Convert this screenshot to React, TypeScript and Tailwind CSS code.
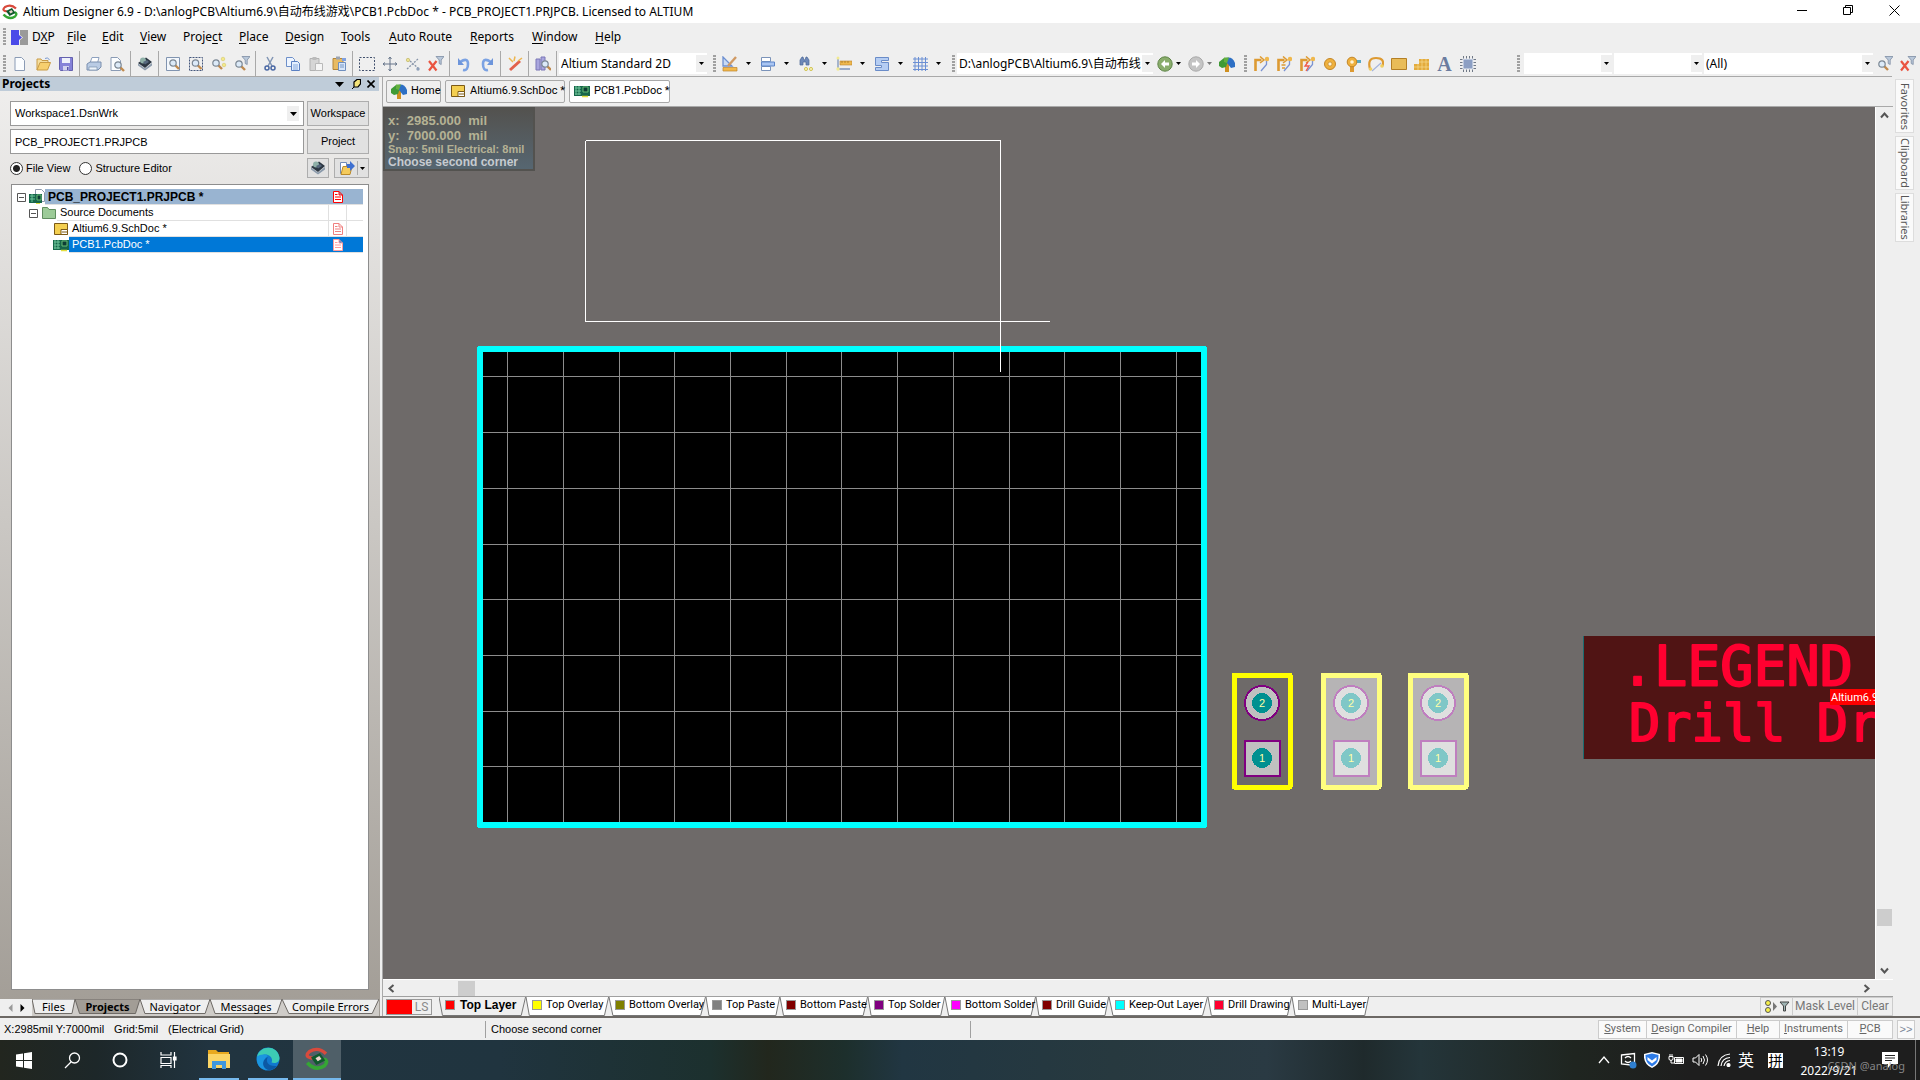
import type { ReactNode } from 'react'

// ---------- icons ----------

function Ic({ children, size = 16 }: { children: ReactNode; size?: number }) {
  return <svg width={size} height={size} viewBox="0 0 16 16" fill="none" className="shrink-0">{children}</svg>
}

function Caret() {
  return <svg width="7" height="4" viewBox="0 0 7 4" className="shrink-0 pointer-events-none"><path d="M0 0h7L3.5 4z" fill="#000" /></svg>
}

function SmallCaret({ fill = '#000' }: { fill?: string }) {
  return <svg width="5" height="3" className="shrink-0"><path d="M0 0h5L2.5 3z" fill={fill} /></svg>
}

const lens = (x: number, y: number) => (
  <>
    <path d={`M${x + 2} ${y + 2}l4 4`} stroke="#c08a4e" strokeWidth="2.4" />
    <circle cx={x} cy={y} r="3.2" fill="#dceaf8" stroke="#7b8794" strokeWidth="1.2" />
  </>
)
const funnel = <path d="M8 .5h8l-2.800 3.500v4.500l-2-1V4z" fill="#b9c8da" stroke="#7d8da3" strokeWidth=".8" />
const page = (x: number) => <path d={`M${x} 1.500h6.500l3 3v10H${x}z`} fill="#fbfdff" stroke="#8a9bb5" />
const track = (
  <>
    <path d="M2.500 15V4h6" stroke="#dd9a32" strokeWidth="2.600" />
    <path d="M7 .5l4 3.500-4 3" stroke="#dd9a32" strokeWidth="1.500" />
    <path d="M8 15l5.500-6.500V4" stroke="#7b93d2" strokeWidth="1.300" />
    <circle cx="14" cy="3" r="2.200" fill="#efb84d" />
  </>
)

const icons: Record<string, ReactNode> = {
  new: page(3),
  open: <><path d="M2 14V3h4l1 1.500h6V7" fill="#f5dfa0" stroke="#c99b45" /><path d="M2 14l3-7.500h10.500L12.500 14z" fill="#f7cf6e" stroke="#c99b45" /><path d="M10 2.500q3-2 4.500 1.500" stroke="#7c9bd0" /></>,
  save: <><path d="M1.500 1.500h13v13h-12l-1-1z" fill="#8582d8" stroke="#6461ae" /><path d="M4 2h8v5H4z" fill="#eef1fb" /><path d="M5 10h6v4.500H5z" fill="#d2d3ef" /><path d="M9 11h1.500v3H9z" fill="#5552a6" /></>,
  print: <><path d="M4 7l2-5.500h7L11.500 7" fill="#fff" stroke="#8da1bf" /><path d="M1 8l3-2h11v5l-3 3H1z" fill="#b9cbe4" stroke="#7a8fae" /><path d="M3 11h8v3H3z" fill="#eef4fb" stroke="#7a8fae" strokeWidth=".7" /></>,
  preview: <>{page(2)}{lens(9, 9)}</>,
  chip: <><path d="M1 7.500l7 5 7-5.500v2.500l-7 5-7-5z" fill="#8b9aab" /><path d="M1 7l8-5.500 6 4.500-7 6z" fill="#2c3743" /><circle cx="6" cy="4.500" r="3" fill="#8fb0a8" /><path d="M6 6l4-2 2 2-4 2.500z" fill="#55677c" /></>,
  zoomDoc: <><path d="M1.500 1.500h13v13h-13z" fill="#f3f7fc" stroke="#8194b0" />{lens(8, 7)}</>,
  zoomArea: <><path d="M1.500 1.500h13v13h-13z" stroke="#44577c" strokeDasharray="2 1" />{lens(7.5, 7)}</>,
  zoomSel: <>{lens(5, 7)}<circle cx="12" cy="3" r="1.800" fill="#f4e98a" stroke="#cdc05a" strokeWidth=".5" /><circle cx="13" cy="9" r="1.800" fill="#f4e98a" stroke="#cdc05a" strokeWidth=".5" /></>,
  zoomFilter: <>{funnel}{lens(5, 8)}</>,
  cut: <><path d="M5 1l5 9M11 1L6 10" stroke="#8195b4" strokeWidth="1.500" /><circle cx="5" cy="12" r="2" stroke="#4a68a4" strokeWidth="1.500" /><circle cx="11" cy="12" r="2" stroke="#4a68a4" strokeWidth="1.500" /></>,
  copy: <><path d="M1.500 1.500h6l2 2v7h-8z" fill="#eef5ff" stroke="#6d8fc9" /><path d="M6.500 5.500h6l2 2v7h-8z" fill="#e4effe" stroke="#5b80c2" /><path d="M8 9h5M8 11h5M8 13h5" stroke="#86a8dd" /></>,
  paste: <><path d="M2 2.500h9v12H2z" fill="#d5d5d5" stroke="#b2b2b2" /><path d="M7.500 7.500h7v7h-7z" fill="#f5f5f5" stroke="#b9b9b9" /><path d="M4.500 1h4v3h-4z" fill="#bbb" /></>,
  rubber: <><path d="M2 2.500h10v11H2z" fill="#e8bb63" stroke="#b4863a" /><path d="M5 .5h4v3H5z" fill="#9aa3b0" /><path d="M7.500 6.500h7v8h-7z" fill="#d7e6fa" stroke="#6f8fbe" /><path d="M9 9h4M9 11h4" stroke="#7796c4" /><path d="M11 2h4v3h-4z" fill="#7fa0e0" /></>,
  select: <path d="M.5 1.500h15v13H.5z" stroke="#41506d" strokeDasharray="2 1.500" />,
  move: <path d="M8 1v14M1 8h14M6.500 3L8 1l1.500 2M6.500 13L8 15l1.500-2M3 6.500L1 8l2 1.500M13 6.500L15 8l-2 1.500" stroke="#66758a" />,
  deselect: <><path d="M2 13L13 3M5 5l9 8" stroke="#8794a8" strokeDasharray="2 1.200" strokeWidth="1.300" /><circle cx="3" cy="4" r="1.700" fill="#ece192" stroke="#b9ae57" strokeWidth=".6" /><circle cx="13" cy="13" r="1.700" fill="#8fa0b9" /></>,
  clear: <><path d="M1 5l7.500 9.500M8.500 5L1 14.500" stroke="#ea5440" strokeWidth="2.200" />{funnel}</>,
  undo: <><path d="M4 6q8-5 8 2t-5 6" stroke="#7ba2e3" strokeWidth="2.600" /><path d="M2 2v7h6z" fill="#6d95db" /></>,
  redo: <><path d="M12 6Q4 1 4 8t5 6" stroke="#7ba2e3" strokeWidth="2.600" /><path d="M14 2v7H8z" fill="#6d95db" /></>,
  wand: <><path d="M3 14L13 5" stroke="#e2604a" strokeWidth="3" /><path d="M2 2l4 4M8 .5L7 5M15 2l-4 3" stroke="#edb64f" strokeWidth="1.500" /></>,
  browse: <><path d="M1 3h4v11H1zM6 1h4v13H6z" fill="#a9a6de" stroke="#7a77b6" />{lens(10, 8)}</>,
  draw: <><path d="M1 1v9h9z" fill="#c9dbf6" stroke="#6c8fd0" strokeWidth="1.300" /><path d="M14 1L6 10" stroke="#d09a64" strokeWidth="2.400" /><path d="M1 11.500h14v3.500H1z" fill="#f2b84c" stroke="#bd842c" strokeWidth=".7" /></>,
  align: <><path d="M1.500 1.500h9v4h-9zM1.500 10.500h9v4h-9z" fill="#fff" stroke="#7b93b9" /><path d="M1.500 6h13v4h-13z" fill="#a9c5f2" stroke="#5c84c8" /></>,
  find: <><path d="M2 9V4l2-3h1l1 3h1l1-3h1l2 3v5H8V6H5v3z" fill="#6d88b8" stroke="#4b6797" strokeWidth=".7" /><circle cx="8" cy="13" r="1.600" fill="#f6efae" stroke="#d3c65a" /><circle cx="13" cy="13" r="1.600" fill="#f6efae" stroke="#d3c65a" /></>,
  dimension: <><path d="M2 1v12h12" stroke="#7d94bb" strokeWidth="1.300" /><path d="M4 5h12v4H4z" fill="#efb84d" stroke="#bb8530" strokeWidth=".6" /><path d="M6 5v2M9 5v2M12 5v2" stroke="#9b6a21" strokeWidth=".7" /><circle cx="2" cy="2" r="1.500" fill="#f2ea92" /><circle cx="2" cy="13" r="1.700" fill="#f2ea92" /></>,
  room: <><path d="M14.500 1.500h-13v8h6v2h-6v3h13v-8h-7v-2h7z" fill="#b5cdf3" stroke="#6a8cc8" /></>,
  grid: <path d="M3 1v14M6.500 1v14M10 1v14M13.500 1v14M1 3h15M1 6.500h15M1 10h15M1 13.500h15" stroke="#6b8fd4" />,
  back: <><circle cx="8" cy="8" r="7.200" fill="#8aad6c" stroke="#5f8548" /><path d="M8 4L4 8l4 4V9.500h4v-3H8z" fill="#fff" /></>,
  forward: <><circle cx="8" cy="8" r="7.200" fill="#c4c4c4" stroke="#a9a9a9" /><path d="M8 4l4 4-4 4V9.500H4v-3h4z" fill="#fff" /></>,
  home: <><path d="M6 7h4v9H6z" fill="#cf9020" /><path d="M0 10V6l5-4 4 3-2 6-4 1z" fill="#3f9a35" /><path d="M7 2q6-2 9 5v4l-4 1-4-5z" fill="#2d6fc4" /><path d="M5 1.500h5L8 7l-3-1z" fill="#64b03f" /></>,
  track,
  trackF: <>{track}<path d="M5.500 9h4M6 12h3" stroke="#dd9a32" strokeWidth="1.300" /></>,
  trackX: <>{track}<path d="M9 6l-3 4h4l-3 5" stroke="#ef5a4c" strokeWidth="1.300" /></>,
  pad: <><circle cx="8" cy="8" r="5.500" fill="#efb13e" stroke="#c38526" /><circle cx="8" cy="8" r="2" fill="#fff4d6" stroke="#b77d23" strokeWidth=".6" /></>,
  via: <><path d="M5 9h4v7H5zM9 4h7v3H9z" fill="#dd9a32" /><path d="M12 4h4v3h-4z" fill="#58a8c4" /><circle cx="7" cy="6" r="4.800" fill="#efb13e" stroke="#c38526" /><circle cx="7" cy="6" r="1.800" fill="#fff4d6" /></>,
  arc: <><path d="M2 13Q-1 2 8 2t6.500 8" stroke="#dd9a32" strokeWidth="2.200" /><path d="M4 15L13 7" stroke="#a3b3dc" strokeWidth="1.200" /><circle cx="2.500" cy="13" r="1.800" fill="#efcf62" /><circle cx="14" cy="10" r="1.800" fill="#efcf62" /></>,
  fill: <path d="M.5 2.500h15v11H.5z" fill="#e9bc58" stroke="#b47f25" />,
  polygon: <><path d="M0 8h5V3h10v11H0z" fill="#e3ab3d" /><path d="M0 11h15M4 8v6M8 3v11M12 3v11M5 6h10" stroke="#f7dc93" strokeWidth=".7" /></>,
  comp: <><path d="M3.500 0v16M6.500 0v16M9.500 0v16M12.500 0v16M0 3.500h16M0 6.500h16M0 9.500h16M0 12.500h16" stroke="#6f7886" /><path d="M3 3h10v10H3z" fill="#8c9fc4" stroke="#e8ecf3" /></>,
  sch: <><path d="M1.500 2.500h13v11h-13z" fill="#f4cf50" stroke="#7c5a16" /><path d="M8 8.500h6.500v5H8z" fill="#fff" stroke="#7c5a16" /><path d="M9 11h5" stroke="#7c5a16" /></>,
  pcb: <><path d="M0 3h16v10H0z" fill="#17664a" /><path d="M1 5h6M1 8h6M1 11h6M2 3v9M5 3v9" stroke="#6fc59a" /><path d="M9 4h5v5H9z" fill="#0c3d35" stroke="#67bd74" /><path d="M8 13.500h6" stroke="#e3df3f" strokeWidth="1.500" /></>,
  project: <><path d="M6.500.5h6l3 3v9h-9z" fill="#fff" stroke="#8d99ab" /><path d="M0 5h13v9H0z" fill="#17664a" /><path d="M1 7h5M1 10h5M3 5v8" stroke="#6fc59a" /><path d="M8 6h4v5H8z" fill="#0c3d35" stroke="#67bd74" /><path d="M7 14.500h4" stroke="#e3df3f" /></>,
  folder: <path d="M1.500 13.500v-11h5l1.500 2h6.500v9z" fill="#9ccb98" stroke="#5f8d5f" />,
  openDoc: <><path d="M1.500 2.500h6v11h-6z" fill="#fff" stroke="#708bb8" /><path d="M2 14.500l2-8h9l-2 8z" fill="#f5cb5c" stroke="#bb8b2b" /><path d="M8 4h3V1l5 5-5 5V8H8z" fill="#3d6fd0" /></>,
  altium: <><path d="M14 4.500Q9-.5 3 3q-4 3.500 2 4.500" stroke="#d84a3c" strokeWidth="2.200" /><path d="M1.500 10.500Q7 16.500 13 12.500q3-3-.5-4.500" stroke="#35a634" strokeWidth="2.400" /><path d="M4 7l6-3 3.500 5-6 3z" fill="#0f5a2c" /><path d="M7 7.500l2.500-1.500L11 8l-2.500 1.500z" fill="#e9d3cb" /></>,
}

function Icon({ name, size }: { name: string; size?: number }) {
  return <Ic size={size}>{icons[name]}</Ic>
}

function DirtyDoc({ color }: { color: string }) {
  return (
    <svg width="10" height="12" viewBox="0 0 10 12" fill="#fff" stroke={color}>
      <path d="M.5.5h5.500l3.500 3.500v7.500h-9zM6 .5V4h3.500M2 3.500h2.500M2 6h6M2 8.500h6" />
    </svg>
  )
}

// ---------- toolbar ----------

const standardTools = [
  ['new', 'open', 'save'],
  ['print', 'preview'],
  ['chip'],
  ['zoomDoc', 'zoomArea', 'zoomSel', 'zoomFilter'],
  ['cut', 'copy', 'paste', 'rubber'],
  ['select', 'move', 'deselect', 'clear'],
  ['undo', 'redo'],
  ['wand'],
  ['browse'],
]

function Grip() {
  return <div className="w-[3px] h-[18px] mx-0.5 shrink-0 bg-[repeating-linear-gradient(#a0a0a0_0_2px,#efefef_2px_3px)]" />
}

function ToolButton({ name }: { name: string }) {
  return <button aria-label={name} className="w-[23px] h-[23px] shrink-0 flex items-center justify-center"><Icon name={name} /></button>
}

function Combo({ label, value, className }: { label: string; value: string; className: string }) {
  return (
    <div className={`relative h-[21px] bg-white shrink-0 ${className}`}>
      <select aria-label={label} className="appearance-none w-full h-full pl-0.5 pr-3 bg-transparent outline-none overflow-hidden whitespace-nowrap">
        <option>{value}</option>
      </select>
      <span className="absolute right-0 inset-y-0.5 w-[11px] flex items-center justify-center bg-[#efefef] pointer-events-none"><SmallCaret /></span>
    </div>
  )
}

function DropTool({ name }: { name: string }) {
  return (
    <div className="w-[38px] flex items-center gap-[5px] shrink-0">
      <ToolButton name={name} />
      <SmallCaret />
    </div>
  )
}

function Toolbar() {
  return (
    <>
      <div className="h-[25px] flex items-center px-px">
        <Grip />
        {standardTools.map((group, i) => (
          <div key={i} className="flex items-center shrink-0">
            {group.map(t => <ToolButton key={t} name={t} />)}
            <span className="w-px h-[25px] mx-0.5 bg-[#a9a9a9]" />
          </div>
        ))}
        <Combo label="View configuration" value="Altium Standard 2D" className="w-[148px]" />
        <div className="flex items-center ml-1">
          <Grip />
          {['draw', 'align', 'find', 'dimension', 'room', 'grid'].map(t => <DropTool key={t} name={t} />)}
        </div>
        <div className="flex items-center ml-1">
          <Grip />
          <Combo label="Document path" value="D:\anlogPCB\Altium6.9\自动布线" className="w-[196px]" />
          <div className="w-[31px] flex items-center"><ToolButton name="back" /><SmallCaret /></div>
          <div className="w-[31px] flex items-center"><ToolButton name="forward" /><SmallCaret fill="#777" /></div>
          <ToolButton name="home" />
        </div>
        <div className="flex items-center ml-1">
          <Grip />
          {['track', 'trackF', 'trackX', 'pad', 'via', 'arc', 'fill', 'polygon'].map(t => <ToolButton key={t} name={t} />)}
          <button aria-label="Place string" className="w-[23px] h-[23px] flex items-center justify-center font-['Liberation_Serif',serif] font-bold text-[20px] leading-5 text-[#6b7c9f]">A</button>
          <ToolButton name="comp" />
        </div>
        <div className="flex items-center ml-auto">
          <Grip />
          <Combo label="Net" value="" className="w-[88px] ml-0.5" />
          <Combo label="Component" value="" className="w-[88px] ml-0.5" />
          <Combo label="Filter" value="(All)" className="w-[169px] ml-0.5" />
          <ToolButton name="zoomFilter" />
          <ToolButton name="clear" />
        </div>
      </div>
      <div className="h-px bg-[#a9a9a9] mr-7" />
    </>
  )
}

// ---------- menu ----------

const menus = [
  ['D', 'X', 'P', 'w-[35px]'],
  ['', 'F', 'ile', 'w-[35px]'],
  ['', 'E', 'dit', 'w-[38px]'],
  ['', 'V', 'iew', 'w-[43px]'],
  ['Proje', 'c', 't', 'w-[56px]'],
  ['', 'P', 'lace', 'w-[46px]'],
  ['', 'D', 'esign', 'w-[56px]'],
  ['', 'T', 'ools', 'w-[48px]'],
  ['', 'A', 'uto Route', 'w-[81px]'],
  ['', 'R', 'eports', 'w-[62px]'],
  ['', 'W', 'indow', 'w-[63px]'],
  ['', 'H', 'elp', 'w-[40px]'],
]

function TitleBar() {
  return (
    <header className="h-[23px] bg-white flex items-center pr-[3px]">
      <span className="w-[23px] pl-0.5"><Icon name="altium" /></span>
      <h1 className="flex-1">Altium Designer 6.9 - D:\anlogPCB\Altium6.9\自动布线游戏\PCB1.PcbDoc * - PCB_PROJECT1.PRJPCB. Licensed to ALTIUM</h1>
      <div className="flex h-5 self-start">
        <button aria-label="Minimize" className="w-[46px] flex items-center justify-center"><svg width="10" height="10" stroke="#000"><path d="M0 5.500h10" /></svg></button>
        <button aria-label="Restore" className="w-[46px] flex items-center justify-center"><svg width="10" height="10" fill="none" stroke="#000"><path d="M.5 2.500h7v7h-7zM2.500 2V.5h7v7H8" /></svg></button>
        <button aria-label="Close" className="w-[46px] flex items-center justify-center"><svg width="11" height="11" stroke="#000"><path d="M.5.5l10 10M10.500.5l-10 10" /></svg></button>
      </div>
    </header>
  )
}

function MenuBar() {
  return (
    <nav className="h-7 flex items-center pl-px">
      <Grip />
      <span className="w-6 pl-[3px]">
        <svg width="17" height="15"><path d="M0 0h8v5l3 2.500L8 10v5H0z" fill="#4a4ae8" /><path d="M9 0h8v15H9v-5l3-2.500L9 5z" fill="#9a9a9a" /></svg>
      </span>
      {menus.map(([a, u, b, w]) => (
        <button key={a + u + b} className={`text-left shrink-0 whitespace-nowrap ${w}`}>{a}<span className="underline underline-offset-2">{u}</span>{b}</button>
      ))}
    </nav>
  )
}

// ---------- projects panel ----------

const panelTabs = [
  { label: 'Files', w: 'w-[43px]' },
  { label: 'Projects', w: 'w-[65px]' },
  { label: 'Navigator', w: 'w-[70px]' },
  { label: 'Messages', w: 'w-[72px]' },
  { label: 'Compile Errors', w: 'w-[97px]' },
]

function TreeBox() {
  return <svg width="9" height="9" fill="none" stroke="#555" className="shrink-0"><path d="M.5.5h8v8h-8zM2 4.500h5" /></svg>
}

function TreeRow({ indent, expand, icon, label, dirty, tone = '' }: { indent: string; expand?: boolean; icon: string; label: string; dirty?: string; tone?: string }) {
  return (
    <li className={`flex h-4 items-center ${indent}`}>
      {expand && <span className="w-[11px] mr-px flex"><TreeBox /></span>}
      <Icon name={icon} />
      <span className={`flex flex-1 h-4 items-center border-b border-[#e0e0e0] pl-[3px] ${tone}`}>
        <span className="flex-1 whitespace-pre">{label}</span>
        <span className={`w-[18px] h-4 flex items-center justify-center border-l ${tone ? 'border-transparent' : 'border-[#e0e0e0]'}`}>{dirty && <DirtyDoc color={dirty} />}</span>
        <span className={`w-[17px] h-4 border-l ${tone ? 'border-transparent' : 'border-[#e0e0e0]'}`} />
      </span>
    </li>
  )
}

function ProjectsPanel() {
  return (
    <aside className="w-[380px] shrink-0 flex flex-col text-[11px] bg-linear-to-b from-[#f0efee] to-[#a29d96]">
      <div className="h-[14px] mr-px flex items-center bg-[#bfccd9] pl-0.5 pr-1 font-['Noto_Sans',sans-serif] text-[12px] leading-[14px] font-bold">
        <h2 className="flex-1">Projects</h2>
        <button aria-label="Panel menu" className="w-4"><svg width="9" height="5"><path d="M0 0h9L4.500 5z" /></svg></button>
        <button aria-label="Pin" className="w-4"><svg width="10" height="11" fill="none"><path d="M1 10l3-3" stroke="#000" /><path d="M3 3l3-2.500h3.500V5L7 8H3z" fill="#f3e37a" stroke="#000" strokeWidth="1.200" /></svg></button>
        <button aria-label="Close panel"><svg width="8" height="8" stroke="#000" strokeWidth="1.600"><path d="M.5.5l7 7M7.500.5l-7 7" /></svg></button>
      </div>

      <div className="grid grid-cols-[1fr_62px] gap-[3px] mt-2.5 ml-2.5 mr-[11px]">
        <div className="relative h-[25px]">
          <select aria-label="Workspace" className="appearance-none w-full h-full border border-[#999] bg-white px-1 outline-none"><option>Workspace1.DsnWrk</option></select>
          <span className="absolute right-[5px] top-[5px] w-3 h-[15px] bg-[#efefef] flex items-center justify-center pointer-events-none"><Caret /></span>
        </div>
        <button className="border border-[#adadad] bg-[#e1e1e1]">Workspace</button>
        <input aria-label="Project" defaultValue="PCB_PROJECT1.PRJPCB" className="h-[25px] w-full min-w-0 border border-[#999] bg-white px-1 outline-none" />
        <button className="border border-[#adadad] bg-[#e1e1e1]">Project</button>
      </div>

      <div className="flex items-center h-5 mt-1 ml-2.5 mr-[11px]">
        {['File View', 'Structure Editor'].map((v, i) => (
          <label key={v} className="flex items-center gap-[3px] mr-[9px]">
            <input type="radio" name="view" defaultChecked={i === 0} className="appearance-none w-[13px] h-[13px] rounded-full border border-[#333] bg-white checked:bg-[radial-gradient(circle,#222_0_3px,#fff_4px)]" />
            {v}
          </label>
        ))}
        <button aria-label="Refresh" className="ml-auto w-[22px] h-5 border border-[#adadad] bg-[#e1e1e1] flex items-center justify-center"><Icon name="chip" /></button>
        <button aria-label="Open document" className="ml-[5px] w-[35px] h-5 border border-[#adadad] bg-[#e1e1e1] flex items-center justify-center gap-0.5">
          <Icon name="openDoc" /><span className="w-px h-3.5 bg-[#aaa]" /><SmallCaret />
        </button>
      </div>

      <ul className="flex-1 bg-white border border-[#8d8d8d] mt-1.5 mx-[11px] mb-[9px] pt-1 pl-[5px] pr-[5px]">
        <TreeRow indent="" expand icon="project" label="PCB_PROJECT1.PRJPCB *" dirty="#f00" tone="bg-[#99b4d1] font-bold text-[12px]" />
        <TreeRow indent="pl-3" expand icon="folder" label="Source Documents" />
        <TreeRow indent="pl-9" icon="sch" label="Altium6.9.SchDoc *" dirty="#f08080" />
        <TreeRow indent="pl-9" icon="pcb" label="PCB1.PcbDoc *" dirty="#ff9c9c" tone="bg-[#0078d7] text-white" />
      </ul>

      <div className="flex h-[17px] mr-px bg-[#cfccc8] font-['Noto_Sans',sans-serif] text-[11px] leading-[14px] shrink-0">
        <div className="w-8 flex items-center justify-around px-1 bg-[#efefef]">
          <button aria-label="Previous tab"><svg width="5" height="8"><path d="M4.500 0v8L.5 4z" fill="#999" /></svg></button>
          <button aria-label="Next tab"><svg width="5" height="8"><path d="M.5 0v8l4-4z" /></svg></button>
        </div>
        {panelTabs.map(t => (
          <button key={t.label} className={`relative h-[15px] shrink-0 whitespace-nowrap ${t.w}`}>
            <svg className="absolute inset-0 w-full h-full" preserveAspectRatio="none" viewBox="0 0 100 16">
              <path d="M0 0L7 15.500H93L100 0z" fill={t.label === 'Projects' ? '#a29d96' : '#efefef'} stroke="#6c6864" vectorEffect="non-scaling-stroke" />
            </svg>
            <span className={t.label === 'Projects' ? 'relative font-bold' : 'relative'}>{t.label}</span>
          </button>
        ))}
      </div>
    </aside>
  )
}

// ---------- pcb canvas ----------

const gridX = [124, 180, 236, 291, 347, 403, 458, 514, 570, 626, 681, 737, 793]
const gridY = [269, 325, 381, 437, 492, 548, 604, 659]
const parts = [
  { x: 879, line: '#ffff00', body: '#6e6a69', pad: '#c0c0c0', ring: '#800080', hole: '#009090' },
  { x: 968, line: '#ffff7f', body: '#b6b4b5', pad: '#dfdfdf', ring: '#bf7fbf', hole: '#7fc7c7' },
  { x: 1055, line: '#ffff7f', body: '#b6b4b5', pad: '#dfdfdf', ring: '#bf7fbf', hole: '#7fc7c7' },
]

function PcbCanvas() {
  return (
    <div className="relative flex-1 min-w-0 bg-[#6e6a69] overflow-hidden">
      <svg className="absolute inset-0 w-full h-full" fill="none" shapeRendering="crispEdges">
        <rect x="97" y="242" width="724" height="476" fill="#000" stroke="#0ff" strokeWidth="6" strokeLinejoin="round" />
        {gridX.map(x => <path key={x} d={`M${x + 0.5} 245v470`} stroke="#8c8c8c" />)}
        {gridY.map(y => <path key={y} d={`M100 ${y + 0.5}h718`} stroke="#8c8c8c" />)}
        <path d="M202.500 33.500h415v231M202.500 33.500v181h464" stroke="#fff" />

        {parts.map(p => (
          <g key={p.x}>
            <rect x={p.x - 28} y="568" width="56" height="112" fill={p.body} stroke={p.line} strokeWidth="5" strokeLinejoin="round" />
            <circle cx={p.x} cy="596" r="17" fill={p.pad} stroke={p.ring} strokeWidth="2" />
            <rect x={p.x - 17} y="634" width="35" height="35" fill={p.pad} stroke={p.ring} strokeWidth="2" />
            {[596, 651].map((y, i) => (
              <g key={y}>
                <circle cx={p.x} cy={y} r="10" fill={p.hole} />
                <text x={p.x} y={y + 4} textAnchor="middle" fill="#ffffa8" className="font-['Liberation_Sans',sans-serif] text-[11px]">{2 - i}</text>
              </g>
            ))}
          </g>
        ))}

        <rect x="1200" y="529" width="400" height="123" fill="#501414" />
        <path d="M1200.500 529v123" stroke="#1c6c70" />
        <g fill="#ff0030" stroke="#ff0030" strokeWidth="2" strokeLinejoin="round" className="font-['DejaVu_Sans_Mono',monospace]">
          <text x="1238" y="578" className="text-[55px]">.LEGEND</text>
          <text x="1246" y="634" className="text-[52px]">Drill Dr</text>
        </g>
        <rect x="1447" y="582" width="100" height="16" fill="#f00" />
        <text x="1448" y="594" fill="#fff" className="font-['Roboto',sans-serif] text-[11px]">Altium6.9</text>
      </svg>

      <div className="absolute left-0 top-0 w-[152px] h-[64px] border-2 border-[#53524f] bg-linear-to-b from-[#53524f] to-[#566671] pl-[3px] pt-1 font-bold text-[#b5b294] whitespace-pre">
        <p className="text-[13px] leading-[15px]">x:  2985.000  mil</p>
        <p className="text-[13px] leading-[15px]">y:  7000.000  mil</p>
        <p className="text-[11px] leading-[13px]">Snap: 5mil Electrical: 8mil</p>
        <p className="text-[12px] leading-[12px] text-[#c6cbd0]">Choose second corner</p>
      </div>
    </div>
  )
}

const docTabs = [
  { icon: 'home', label: 'Home', w: 'w-[55px]' },
  { icon: 'sch', label: 'Altium6.9.SchDoc *', w: 'w-[120px]' },
  { icon: 'pcb', label: 'PCB1.PcbDoc *', w: 'w-[101px]' },
]

const layers = [
  { label: 'Top Layer', sw: 'bg-[#ff0000]', w: 'w-[87px]' },
  { label: 'Top Overlay', sw: 'bg-[#ffff00]', w: 'w-[83px]' },
  { label: 'Bottom Overlay', sw: 'bg-[#808000]', w: 'w-[97px]' },
  { label: 'Top Paste', sw: 'bg-[#808080]', w: 'w-[74px]' },
  { label: 'Bottom Paste', sw: 'bg-[#800000]', w: 'w-[88px]' },
  { label: 'Top Solder', sw: 'bg-[#800080]', w: 'w-[77px]' },
  { label: 'Bottom Solder', sw: 'bg-[#ff00ff]', w: 'w-[91px]' },
  { label: 'Drill Guide', sw: 'bg-[#800000]', w: 'w-[73px]' },
  { label: 'Keep-Out Layer', sw: 'bg-[#00ffff]', w: 'w-[99px]' },
  { label: 'Drill Drawing', sw: 'bg-[#ff0030]', w: 'w-[84px]' },
  { label: 'Multi-Layer', sw: 'bg-[#c0c0c0]', w: 'w-[77px]' },
]

function Chevron({ d }: { d: string }) {
  return <svg width="9" height="9" fill="none" stroke="#555" strokeWidth="2"><path d={d} /></svg>
}

function Editor() {
  return (
    <main className="flex-1 min-w-0 flex flex-col border-l border-[#a9a9a9] ml-0.5">
      <div className="h-[30px] flex items-center gap-1 pl-[3px] pb-1 pt-[3px] border-b border-[#a9a9a9] shrink-0">
        {docTabs.map(t => (
          <button key={t.label} className={`h-[23px] border border-[#a9a9a9] rounded-xs flex items-center gap-1 pl-1 whitespace-nowrap font-['Roboto',sans-serif] text-[11px] ${t.w} ${t.icon === 'pcb' ? 'bg-white' : ''}`}>
            <Icon name={t.icon} />{t.label}
          </button>
        ))}
      </div>
      <div className="flex-1 min-h-0 flex">
        <PcbCanvas />
        <div className="w-[18px] border-l border-white flex flex-col items-center py-1">
          <button aria-label="Scroll up"><Chevron d="M1 6.500l3.500-4L8 6.500" /></button>
          <div className="flex-1" />
          <div className="w-[15px] h-[17px] bg-[#cdcdcd] mb-10" />
          <button aria-label="Scroll down"><Chevron d="M1 2.500l3.500 4L8 2.500" /></button>
        </div>
      </div>
      <div className="h-[17px] border-t border-white flex items-center pl-1 pr-[22px] shrink-0">
        <button aria-label="Scroll left"><Chevron d="M6.500 1l-4 3.500L6.500 8" /></button>
        <div className="w-[17px] h-[15px] bg-[#cdcdcd] ml-[62px]" />
        <button aria-label="Scroll right" className="ml-auto"><Chevron d="M2.500 1l4 3.500L2.500 8" /></button>
      </div>
      <div className="h-5 flex border-t border-[#a0a0a0] shrink-0 font-['Roboto',sans-serif] text-[11px] leading-4">
        <div className="w-[56px] pl-[3px] pt-[2px]">
          <div className="w-[46px] h-[16px] border border-[#999] flex"><span className="w-[25px] bg-[#ff0000]" /><button className="flex-1 text-[12px] leading-[14px] text-[#888]">LS</button></div>
        </div>
        {layers.map((l, i) => (
          <button key={l.label} className={`relative h-[19px] shrink-0 whitespace-nowrap flex items-start ${l.w}`}>
            <svg className="absolute inset-0 w-full h-full" preserveAspectRatio="none" viewBox="0 0 100 19">
              <path d="M0 0L4 18.500H94.500L99.500 0" fill={i === 0 ? '#efefef' : '#fff'} stroke="#777" vectorEffect="non-scaling-stroke" />
            </svg>
            <span className={`relative flex items-center pl-1.5 ${i === 0 ? "font-['Liberation_Sans',sans-serif] font-bold text-[12px] gap-[5px]" : 'gap-1'}`}>
              <span className={`w-2.5 h-2.5 border border-[#999] ${l.sw}`} />{l.label}
            </span>
          </button>
        ))}
        <div className="ml-auto flex h-[19px] text-[12px] leading-[17px] text-[#777]">
          <button aria-label="Highlight filter" className="w-[33px] border border-[#ccc] flex items-center justify-center">
            <svg width="26" height="13"><circle cx="4" cy="3" r="2.500" fill="#f6f04a" stroke="#555" /><circle cx="4" cy="10" r="2.500" fill="#f6f04a" stroke="#555" /><path d="M9 2v9l4-4.500z" fill="#777" /><path d="M16 2h9l-3.500 4v5h-2V6z" fill="#9fb4b4" stroke="#444" /></svg>
          </button>
          <button className="w-[65px] border border-[#ccc] border-l-0">Mask Level</button>
          <button className="w-[35px] border border-[#ccc] border-l-0">Clear</button>
        </div>
      </div>
    </main>
  )
}

// ---------- bottom ----------

const statusButtons = [
  ['S', 'ystem', 'w-[48px]'],
  ['D', 'esign Compiler', 'w-[90px]'],
  ['H', 'elp', 'w-[43px]'],
  ['I', 'nstruments', 'w-[68px]'],
  ['P', 'CB', 'w-[45px]'],
]

function StatusBar() {
  return (
    <footer className="h-6 shrink-0 border-t-2 border-[#6c6864] flex items-center pl-1 pr-[5px] text-[11px]">
      <div className="flex gap-2.5 w-[481px]"><span>X:2985mil Y:7000mil</span><span>Grid:5mil</span><span>(Electrical Grid)</span></div>
      <div className="h-[17px] w-[486px] border-x border-[#a0a0a0] pl-[5px] leading-4">Choose second corner</div>
      <div className="flex ml-auto h-[19px] border-l border-[#ccc] text-[#666] font-['Roboto',sans-serif] leading-4">
        {statusButtons.map(([u, rest, w]) => (
          <button key={u + rest} className={`bg-[#fafafa] border border-l-0 border-[#ccc] ${w}`}><span className="underline">{u}</span>{rest}</button>
        ))}
      </div>
      <button className="w-[18px] h-[19px] ml-1 border border-[#ccc] bg-[#fafafa] text-[#7c8798] leading-4">&gt;&gt;</button>
    </footer>
  )
}

function TaskBar() {
  return (
    <footer className="h-10 shrink-0 flex items-center text-white bg-[linear-gradient(90deg,#22261f_0%,#1d2729_5%,#213440_11%,#20343f_26%,#1c302e_37%,#22271d_40%,#1d2f2c_44%,#213642_47%,#27393f_58%,#2a3a43_66%,#1f2a2c_71%,#24353a_74%,#1f2520_82%,#1e1e1e_88%)]">
      <button aria-label="Start" className="w-12 h-10 flex items-center justify-center"><svg width="16" height="17" fill="#fff"><path d="M0 2.500L7 1.500V8H0zM8 1.300L16 0v8H8zM0 9h7v6.500L0 14.500zM8 9h8v8l-8-1.300z" /></svg></button>
      <button aria-label="Search" className="w-12 h-10 flex items-center justify-center"><svg width="17" height="17" fill="none" stroke="#fff" strokeWidth="1.300"><circle cx="10.500" cy="6" r="5" /><path d="M7 10l-6 6" /></svg></button>
      <button aria-label="Cortana" className="w-12 h-10 flex items-center justify-center"><svg width="16" height="16" fill="none" stroke="#fff" strokeWidth="2"><circle cx="8" cy="8" r="6.500" /></svg></button>
      <button aria-label="Task view" className="w-12 h-10 flex items-center justify-center"><svg width="17" height="16" fill="none" stroke="#fff" strokeWidth="1.200"><path d="M1 0v3h10V0M1 5.500h10v6H1zM1 16v-2.500h10V16M14.500 0v16" /><path d="M13.500 5h2.500v3h-2.500z" fill="#fff" /></svg></button>
      <button aria-label="File Explorer" className="w-10 h-10 ml-[7px] flex items-center justify-center border-b-2 border-[#76b9ed]">
        <svg width="22" height="19"><path d="M0 0h8l2 2h11v16H0z" fill="#e8a91f" /><path d="M0 4h22v14H0z" fill="#fbd566" /><path d="M4 11h14v8h-4v-4H8v4H4z" fill="#3f97dd" /></svg>
      </button>
      <button aria-label="Edge" className="w-10 h-10 ml-[9px] flex items-center justify-center border-b-2 border-[#76b9ed]">
        <svg width="24" height="24"><circle cx="12" cy="12" r="11.500" fill="#1179cf" /><path d="M1 10C3-2 22-3 23.500 11c0 4-4 6-8 4.500C18 11 12 6 7 8c-3 0-5 1-6 2z" fill="#3ccbb4" /><path d="M1 10c3-3 8-3 11-1-5 2-5 9 0 14C4 23 0 17 1 10z" fill="#1b96e0" /><path d="M12 10c-3 4 0 10 9 9-3 4-8 5-11 3-5-4-3-10 2-12z" fill="#0c59a4" /></svg>
      </button>
      <button aria-label="Altium Designer" className="w-12 h-10 ml-[5px] flex items-center justify-center border-b-2 border-[#76b9ed] bg-[#4f5f68]"><Icon name="altium" size={24} /></button>

      <div className="ml-auto flex items-center h-10 mr-1 border-r border-[#777]">
        <button aria-label="Hidden icons" className="w-6 flex justify-center"><svg width="12" height="8" fill="none" stroke="#fff" strokeWidth="1.300"><path d="M1 7l5-6 5 6" /></svg></button>
        <span className="w-6 flex justify-center"><svg width="17" height="17" fill="none" stroke="#fff" strokeWidth="1.300"><path d="M1.500 3l13-1.500v12l-13-1.500zM5 6q3-3 6 0M11 9q-3 3-6 0" /><circle cx="13" cy="13" r="3.500" fill="#2f7fd0" stroke="none" /></svg></span>
        <span className="w-6 flex justify-center"><svg width="16" height="16"><path d="M0 2l8-2 8 2q1 10-8 14Q-1 12 0 2z" fill="#fff" /><path d="M1.500 3L8 1.500 14.500 3q.5 8-6.500 11.500Q1 11 1.500 3z" fill="#2c7be8" /><path d="M3.500 5L8 8.500 12.500 5v3L8 11.500 3.500 8z" fill="#fff" /></svg></span>
        <span className="w-6 flex justify-center"><svg width="17" height="12" fill="none" stroke="#fff"><path d="M6.500 3.500h9v6h-9zM1 2.500h4v3q-2 2-4 0zM2 0v2M4 0v2M3 6v3h3" /><path d="M8 5h6v3H8z" fill="#fff" /></svg></span>
        <span className="w-6 flex justify-center"><svg width="17" height="14" fill="none" stroke="#fff"><path d="M1 5h2.500L7 1.500v11L3.500 9H1zM9 5q1.500 2 0 4M11 3q3 4 0 8M13.500 1.500q4 5.500 0 11" /></svg></span>
        <span className="w-6 flex justify-center"><svg width="14" height="14" fill="none" stroke="#fff" strokeWidth="1.200"><path d="M1 13Q2 2 13 1M4 13q1-8 9-8.500M7 13q1-5 6-5.500" /><circle cx="11.500" cy="12" r="1.500" fill="#fff" /></svg></span>
        <span className="w-5 text-center text-[16px]">英</span>
        <span className="w-[15px] h-[15px] ml-3 bg-white text-black text-[14px] leading-[15px] text-center">拼</span>
        <time className="w-[92px] text-center text-[12px] leading-[19px] pt-px">13:19<br />2022/9/21</time>
        <button aria-label="Notifications" className="relative w-10 h-10 flex items-center justify-center">
          <svg width="17" height="16" className="mr-2.5"><path d="M0 0h16v12h-7l-3 4v-4H0z" fill="#fff" /><path d="M3 3.500h10M3 6h10M3 8.500h7" stroke="#222" /></svg>
          <span className="absolute right-2.5 top-[18px] text-[11px] leading-4 text-[#a0a0a0]/80 whitespace-nowrap">CSDN @analog</span>
        </button>
      </div>
    </footer>
  )
}

export default function App() {
  return (
    <div className="h-screen flex flex-col overflow-hidden bg-[#efefef] text-black font-['Liberation_Sans','Noto_Sans_CJK_SC',sans-serif] text-[12px]">
      <div className="shrink-0 font-['Noto_Sans','Noto_Sans_CJK_SC',sans-serif] text-[12px] leading-4">
        <TitleBar />
        <MenuBar />
        <Toolbar />
      </div>
      <div className="flex-1 min-h-0 flex">
        <ProjectsPanel />
        <Editor />
        <div className="w-[27px] shrink-0 pl-0.5 pt-0.5 flex flex-col gap-[3px] text-[11px] leading-4 text-[#555] font-['Noto_Sans',sans-serif]">
          <button className="w-[19px] h-[54px] border border-[#ddd] bg-[#fafafa] [writing-mode:vertical-rl]">Favorites</button>
          <button className="w-[19px] h-[54px] border border-[#ddd] bg-[#fafafa] [writing-mode:vertical-rl]">Clipboard</button>
          <button className="w-[19px] h-[49px] border border-[#ddd] bg-[#fafafa] [writing-mode:vertical-rl]">Libraries</button>
        </div>
      </div>
      <StatusBar />
      <div className="font-['Noto_Sans','Noto_Sans_CJK_SC',sans-serif]"><TaskBar /></div>
    </div>
  )
}
